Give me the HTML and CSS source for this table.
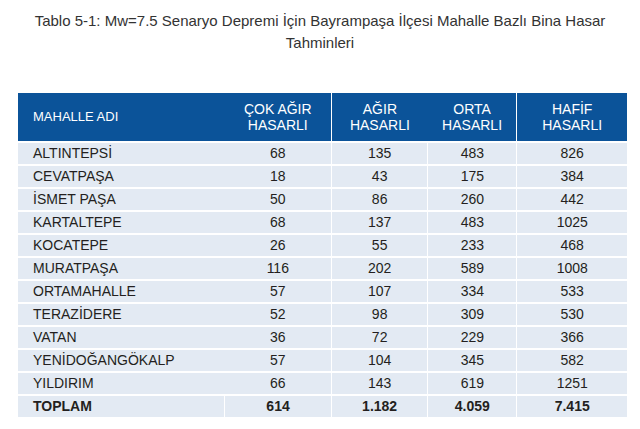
FILE: index.html
```html
<!DOCTYPE html>
<html>
<head>
<meta charset="utf-8">
<title>Tablo 5-1</title>
<link rel="stylesheet" href="styles.css">
</head>
<body>
<div id="page">
<p class="caption">Tablo 5-1: Mw=7.5 Senaryo Depremi İçin Bayrampaşa İlçesi Mahalle Bazlı Bina Hasar<br>Tahminleri</p>
<table class="hasar">
<thead>
<tr>
<th class="name">MAHALLE ADI</th>
<th class="c1">ÇOK AĞIR<br>HASARLI</th>
<th class="c2 sep">AĞIR<br>HASARLI</th>
<th class="c3">ORTA<br>HASARLI</th>
<th class="c4 sep">HAFİF<br>HASARLI</th>
</tr>
</thead>
<tbody>
<tr><td class="name">ALTINTEPSİ</td><td>68</td><td class="sep">135</td><td class="sep">483</td><td class="sep">826</td></tr>
<tr><td class="name">CEVATPAŞA</td><td>18</td><td class="sep">43</td><td class="sep">175</td><td class="sep">384</td></tr>
<tr><td class="name">İSMET PAŞA</td><td>50</td><td class="sep">86</td><td class="sep">260</td><td class="sep">442</td></tr>
<tr><td class="name">KARTALTEPE</td><td>68</td><td class="sep">137</td><td class="sep">483</td><td class="sep">1025</td></tr>
<tr><td class="name">KOCATEPE</td><td>26</td><td class="sep">55</td><td class="sep">233</td><td class="sep">468</td></tr>
<tr><td class="name">MURATPAŞA</td><td>116</td><td class="sep">202</td><td class="sep">589</td><td class="sep">1008</td></tr>
<tr><td class="name">ORTAMAHALLE</td><td>57</td><td class="sep">107</td><td class="sep">334</td><td class="sep">533</td></tr>
<tr><td class="name">TERAZİDERE</td><td>52</td><td class="sep">98</td><td class="sep">309</td><td class="sep">530</td></tr>
<tr><td class="name">VATAN</td><td>36</td><td class="sep">72</td><td class="sep">229</td><td class="sep">366</td></tr>
<tr><td class="name">YENİDOĞANGÖKALP</td><td>57</td><td class="sep">104</td><td class="sep">345</td><td class="sep">582</td></tr>
<tr><td class="name">YILDIRIM</td><td>66</td><td class="sep">143</td><td class="sep">619</td><td class="sep">1251</td></tr>
<tr class="total"><td class="name">TOPLAM</td><td class="sep">614</td><td class="sep">1.182</td><td class="sep">4.059</td><td class="sep">7.415</td></tr>
</tbody>
</table>
</div>
</body>
</html>
```

FILE: styles.css
```css
body { margin: 0; background: #fff; font-family: "Liberation Sans", Arial, Helvetica, sans-serif; color: #231f20; }
#page { width: 640px; }
.caption { margin: 10px 0 0 0; text-align: center; font-size: 15px; line-height: 22px; color: #333; }

.hasar { border-collapse: collapse; margin: 39px 0 0 18px; width: 609px; font-size: 13px; }
.hasar th { background: #0b5399; color: #fff; font-weight: normal; height: 48px; padding: 0; line-height: 16px; text-align: center; font-size: 14px; }
.hasar th.name { text-align: left; padding-left: 15px; width: 192px; font-size: 13px; }
.hasar th.c1 { width: 107px; }
.hasar th.c2 { width: 96px; }
.hasar th.c3 { width: 89px; }
.hasar th.c4 { width: 110px; }
.hasar th.sep { border-left: 1px solid #fff; }

.hasar td { background: #e3eaf3; height: 21px; padding: 0; text-align: center; border-top: 2px solid #fff; line-height: 15px; font-size: 14px; }
.hasar td.name { text-align: left; padding-left: 15px; }
.hasar td.sep { border-left: 1px solid #fff; }
.hasar tr.total td { font-weight: bold; }
```
